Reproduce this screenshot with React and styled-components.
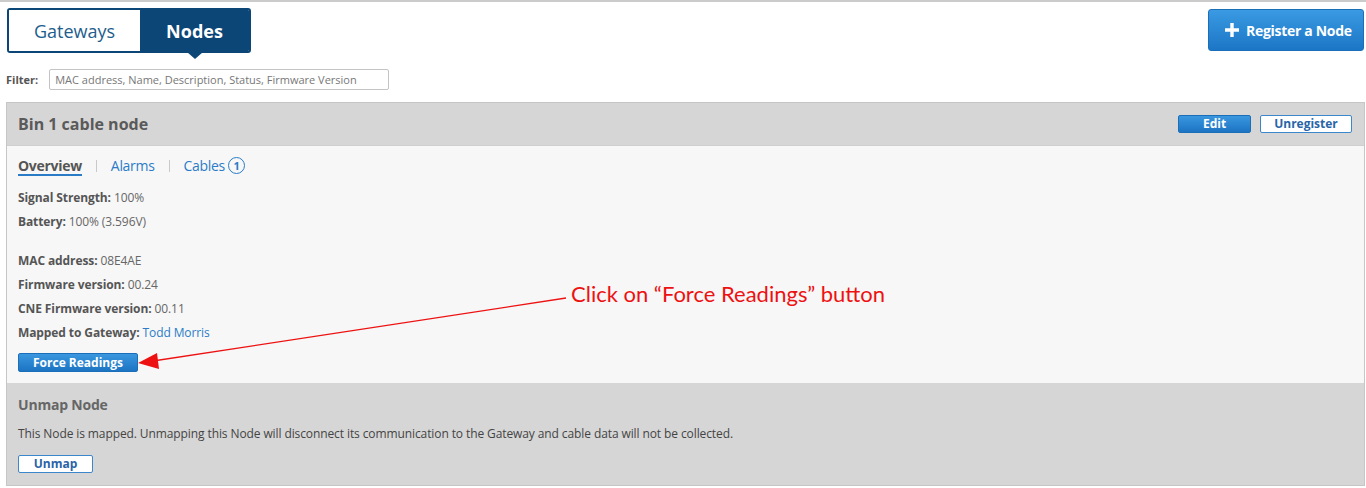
import React from "react";
import styled, { createGlobalStyle } from "styled-components";

const Global = createGlobalStyle`
  html, body { margin: 0; padding: 0; background: #fff; }
  body { font-family: "Open Sans", "DejaVu Sans", sans-serif; color: #555; }
  * { box-sizing: border-box; }
`;

const Page = styled.div`
  border-top: 2px solid #cbcbcb;
  padding: 6px 1px 0 6px;
  width: 1366px;
`;

const TopBar = styled.div`
  display: flex;
  justify-content: space-between;
  align-items: flex-start;
`;

const Segmented = styled.div`
  display: flex;
  margin-left: 1px;
  height: 45px;
  border: 2px solid #0b4677;
  border-radius: 3px;
  background: #fff;
`;

const SegTab = styled.div`
  position: relative;
  display: flex;
  align-items: center;
  justify-content: center;
  width: ${(p) => p.$w}px;
  font-size: 18px;
  font-weight: ${(p) => (p.$active ? 700 : 400)};
  color: ${(p) => (p.$active ? "#fff" : "#1e5d8c")};
  background: ${(p) => (p.$active ? "#0b4677" : "#fff")};
  border-radius: ${(p) => (p.$active ? "0 1px 1px 0" : "1px 0 0 1px")};
  &::after {
    content: "";
    display: ${(p) => (p.$active ? "block" : "none")};
    position: absolute;
    left: 50%;
    bottom: -8px;
    margin-left: -8px;
    border-left: 8px solid transparent;
    border-right: 8px solid transparent;
    border-top: 7px solid #0b4677;
  }
`;

const PrimaryButton = styled.button`
  display: flex;
  align-items: center;
  gap: 7px;
  margin-top: 1px;
  margin-right: 1px;
  height: 42px;
  width: 156px;
  padding: 0 0 0 16px;
  border: 1px solid #1a6fb8;
  border-radius: 3px;
  background: linear-gradient(#3a9ae2, #1c76c6);
  color: #fff;
  font-family: "Open Sans", sans-serif;
  font-size: 14px;
  font-weight: 700;
  letter-spacing: -0.3px;
`;

const FilterRow = styled.div`
  display: flex;
  align-items: center;
  gap: 11px;
  margin-top: 16px;
`;

const FilterLabel = styled.label`
  font-size: 11px;
  font-weight: 700;
  color: #555;
`;

const FilterInput = styled.input`
  width: 340px;
  height: 21px;
  border: 1px solid #c4c4c4;
  border-radius: 2px;
  padding: 0 5px;
  font-family: "Open Sans", sans-serif;
  font-size: 11px;
  color: #555;
  &::placeholder { color: #777; }
`;

const Panel = styled.div`
  position: relative;
  margin-top: 12px;
  border: 1px solid #c6c6c6;
  background: #f7f7f7;
`;

const PanelHeader = styled.div`
  display: flex;
  align-items: center;
  justify-content: space-between;
  height: 43px;
  padding: 0 12px 0 11px;
  background: #d6d6d6;
  border-bottom: 1px solid #cfcfcf;
`;

const Title = styled.h2`
  margin: 0;
  font-size: 16px;
  font-weight: 700;
  color: #5a5a5a;
`;

const HeaderActions = styled.div`
  display: flex;
  gap: 9px;
`;

const SmallButton = styled.button`
  height: ${(p) => p.$h || 18}px;
  width: ${(p) => p.$w}px;
  padding: 0;
  border-radius: 2px;
  font-family: "Open Sans", sans-serif;
  font-size: 12px;
  font-weight: 700;
  line-height: 1;
  border: 1px solid ${(p) => (p.$outline ? "#3c87cc" : "#1a6fb8")};
  background: ${(p) => (p.$outline ? "#fff" : "linear-gradient(#3a97df, #1c74c3)")};
  color: ${(p) => (p.$outline ? "#2a64a8" : "#fff")};
`;

const Body = styled.div`
  padding: 9px 11px 11px;
`;

const Tabs = styled.div`
  display: flex;
  align-items: center;
  height: 21px;
`;

const TabLink = styled.span`
  display: flex;
  align-items: center;
  gap: 3px;
  height: 21px;
  padding-top: 1px;
  font-size: 14px;
  font-weight: ${(p) => (p.$active ? 700 : 400)};
  color: ${(p) => (p.$active ? "#555" : "#2a7cc7")};
  border-bottom: 2px solid ${(p) => (p.$active ? "#2a7cc7" : "transparent")};
  letter-spacing: -0.3px;
`;

const Sep = styled.span`
  width: 1px;
  height: 12px;
  background: #c9c9c9;
  margin: 0 14px;
`;

const Badge = styled.span`
  display: inline-flex;
  align-items: center;
  justify-content: center;
  width: 17px;
  height: 17px;
  border: 1.5px solid #2a7cc7;
  border-radius: 50%;
  font-size: 11px;
  font-weight: 700;
  color: #2a7cc7;
`;

const Fields = styled.div`
  margin-top: ${(p) => p.$mt}px;
`;

const Field = styled.div`
  font-size: 12px;
  line-height: 24px;
  color: #666;
  letter-spacing: -0.1px;
  b { color: #555; font-weight: 700; }
`;

const Link = styled.a`
  color: #2a7cc7;
  text-decoration: none;
`;

const Unmap = styled.div`
  padding: 12px 11px 12px;
  background: #d6d6d6;
`;

const SubTitle = styled.h3`
  margin: 0;
  font-size: 14px;
  font-weight: 700;
  line-height: 20px;
  color: #666;
  letter-spacing: -0.2px;
`;

const Text = styled.p`
  margin: 7px 0 0;
  font-size: 12px;
  line-height: 24px;
  color: #444;
  letter-spacing: -0.1px;
`;

const ButtonRow = styled.div`
  margin-top: ${(p) => p.$mt}px;
  display: flex;
`;

const Annotation = styled.div`
  position: absolute;
  left: 564px;
  top: 177px;
  font-family: "Lato", "Liberation Sans", sans-serif;
  font-size: 22px;
  color: #ee1111;
  white-space: nowrap;
`;

const Arrow = styled.svg`
  position: absolute;
  left: 0;
  top: 0;
  overflow: visible;
  pointer-events: none;
`;

export default function App() {
  return (
    <>
      <Global />
      <Page>
        <TopBar>
          <Segmented>
            <SegTab $w={131}>Gateways</SegTab>
            <SegTab $w={109} $active>Nodes</SegTab>
          </Segmented>
          <PrimaryButton>
            <svg width="14" height="14" viewBox="0 0 14 14">
              <path d="M5.3 0h3.4v5.3H14v3.4H8.7V14H5.3V8.7H0V5.3h5.3z" fill="#fff" />
            </svg>
            Register a Node
          </PrimaryButton>
        </TopBar>
        <FilterRow>
          <FilterLabel>Filter:</FilterLabel>
          <FilterInput placeholder="MAC address, Name, Description, Status, Firmware Version" />
        </FilterRow>
        <Panel>
          <PanelHeader>
            <Title>Bin 1 cable node</Title>
            <HeaderActions>
              <SmallButton $w={73}>Edit</SmallButton>
              <SmallButton $w={92} $outline>Unregister</SmallButton>
            </HeaderActions>
          </PanelHeader>
          <Body>
            <Tabs>
              <TabLink $active>Overview</TabLink>
              <Sep />
              <TabLink>Alarms</TabLink>
              <Sep />
              <TabLink>
                Cables <Badge>1</Badge>
              </TabLink>
            </Tabs>
            <Fields $mt={10}>
              <Field><b>Signal Strength:</b> 100%</Field>
              <Field><b>Battery:</b> 100% (3.596V)</Field>
            </Fields>
            <Fields $mt={15}>
              <Field><b>MAC address:</b> 08E4AE</Field>
              <Field><b>Firmware version:</b> 00.24</Field>
              <Field><b>CNE Firmware version:</b> 00.11</Field>
              <Field><b>Mapped to Gateway:</b> <Link>Todd Morris</Link></Field>
            </Fields>
            <ButtonRow $mt={8}>
              <SmallButton $w={120} $h={19}>Force Readings</SmallButton>
            </ButtonRow>
          </Body>
          <Unmap>
            <SubTitle>Unmap Node</SubTitle>
            <Text>This Node is mapped. Unmapping this Node will disconnect its communication to the Gateway and cable data will not be collected.</Text>
            <ButtonRow $mt={9}>
              <SmallButton $w={75} $outline>Unmap</SmallButton>
            </ButtonRow>
          </Unmap>
          <Arrow width="1" height="1">
            <line x1="559" y1="195" x2="146" y2="258" stroke="#ee1111" strokeWidth="1.3" />
            <polygon points="131,260 150,250 152,266" fill="#ee1111" />
          </Arrow>
          <Annotation>Click on “Force Readings” button</Annotation>
        </Panel>
      </Page>
    </>
  );
}
